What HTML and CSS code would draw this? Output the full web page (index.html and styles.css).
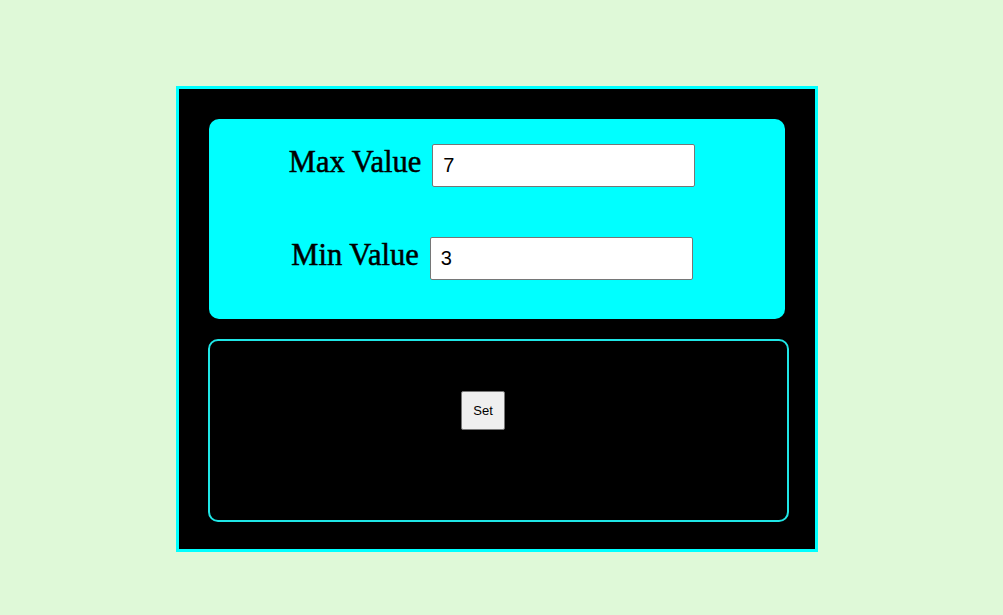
FILE: index.html
```html
<!DOCTYPE html>
<html>
<head>
<meta charset="utf-8">
<link rel="stylesheet" href="styles.css">
</head>
<body>
<div class="frame">
  <div class="panel">
    <div class="row">
      <label class="label">Max Value</label>
      <input class="field" type="text" value="7">
    </div>
    <div class="row">
      <label class="label">Min Value</label>
      <input class="field" type="text" value="3">
    </div>
  </div>
  <div class="actions">
    <button class="btn">Set</button>
  </div>
</div>
</body>
</html>
```
FILE: styles.css
```css
html, body {
  margin: 0;
  padding: 0;
}
body {
  background: #dff9d8;
  padding: 86px 0 0 176px;
  font-family: "Liberation Sans", Arial, sans-serif;
}
.frame {
  box-sizing: border-box;
  width: 642px;
  height: 466px;
  background: #000;
  border: 3px solid #00ffff;
  padding: 30px 30px 0 30px;
  display: flex;
  flex-direction: column;
}
.panel {
  box-sizing: border-box;
  width: 576px;
  height: 200px;
  background: #00ffff;
  border-radius: 10px;
  padding: 25px 10px 0 0;
  display: flex;
  flex-direction: column;
  gap: 50px;
}
.row {
  display: flex;
  justify-content: center;
  align-items: center;
  gap: 11px;
  height: 43px;
}
.label {
  font-family: "Liberation Serif", "Times New Roman", serif;
  font-weight: normal;
  font-size: 30.5px;
  color: #000;
  line-height: 1;
  margin-bottom: 6px;
  -webkit-text-stroke: 0.5px #000;
}
.field {
  box-sizing: border-box;
  width: 263px;
  height: 43px;
  border: 1px solid #767676;
  border-radius: 2px;
  padding: 0 10px;
  font-family: "Liberation Sans", Arial, sans-serif;
  font-size: 20px;
  color: #000;
  background: #fff;
}
.actions {
  box-sizing: border-box;
  margin-top: 20px;
  margin-left: -1px;
  width: 581px;
  height: 183px;
  border: 2px solid #1fe6e6;
  border-radius: 10px;
  padding: 50px 0 0 251px;
}
.btn {
  box-sizing: border-box;
  width: 44px;
  height: 39px;
  background: #efefef;
  border: 1px solid #767676;
  border-radius: 2px;
  font-family: "Liberation Sans", Arial, sans-serif;
  font-size: 13px;
  color: #000;
  padding: 0;
}
```
